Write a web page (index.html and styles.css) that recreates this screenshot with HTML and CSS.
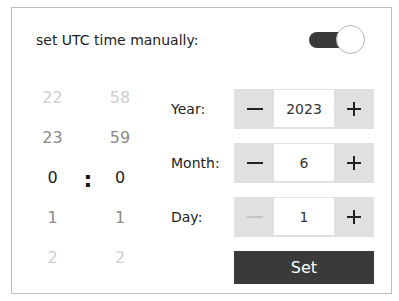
FILE: index.html
```html
<!DOCTYPE html>
<html>
<head>
<meta charset="utf-8">
<link rel="stylesheet" href="styles.css">
</head>
<body>
<div class="panel">
  <div class="header">
    <span class="title">set UTC time manually:</span>
    <div class="switch"><span class="track"></span><span class="knob"></span></div>
  </div>
  <div class="body">
    <div class="picker">
      <div class="col hours">
        <div class="cell far">22</div>
        <div class="cell near">23</div>
        <div class="cell sel">0</div>
        <div class="cell near">1</div>
        <div class="cell far">2</div>
      </div>
      <div class="col colon">
        <div class="cell"></div>
        <div class="cell"></div>
        <div class="cell sep">:</div>
        <div class="cell"></div>
        <div class="cell"></div>
      </div>
      <div class="col minutes">
        <div class="cell far">58</div>
        <div class="cell near">59</div>
        <div class="cell sel">0</div>
        <div class="cell near">1</div>
        <div class="cell far">2</div>
      </div>
    </div>
    <div class="form">
      <div class="row">
        <span class="label">Year:</span>
        <div class="stepper">
          <button class="btn"><svg width="16" height="16" viewBox="0 0 16 16"><line x1="0" y1="8" x2="16" y2="8" stroke="#222" stroke-width="2"/></svg></button>
          <span class="value">2023</span>
          <button class="btn"><svg width="16" height="16" viewBox="0 0 16 16"><line x1="1" y1="8" x2="15" y2="8" stroke="#222" stroke-width="2"/><line x1="8" y1="1" x2="8" y2="15" stroke="#222" stroke-width="2"/></svg></button>
        </div>
      </div>
      <div class="row">
        <span class="label">Month:</span>
        <div class="stepper">
          <button class="btn"><svg width="16" height="16" viewBox="0 0 16 16"><line x1="0" y1="8" x2="16" y2="8" stroke="#222" stroke-width="2"/></svg></button>
          <span class="value">6</span>
          <button class="btn"><svg width="16" height="16" viewBox="0 0 16 16"><line x1="1" y1="8" x2="15" y2="8" stroke="#222" stroke-width="2"/><line x1="8" y1="1" x2="8" y2="15" stroke="#222" stroke-width="2"/></svg></button>
        </div>
      </div>
      <div class="row">
        <span class="label">Day:</span>
        <div class="stepper">
          <button class="btn"><svg width="16" height="16" viewBox="0 0 16 16"><line x1="0" y1="8" x2="16" y2="8" stroke="#c4c4c4" stroke-width="2"/></svg></button>
          <span class="value">1</span>
          <button class="btn"><svg width="16" height="16" viewBox="0 0 16 16"><line x1="1" y1="8" x2="15" y2="8" stroke="#222" stroke-width="2"/><line x1="8" y1="1" x2="8" y2="15" stroke="#222" stroke-width="2"/></svg></button>
        </div>
      </div>
      <div class="row">
        <span class="label"></span>
        <button class="set">Set</button>
      </div>
    </div>
  </div>
</div>
</body>
</html>
```

FILE: styles.css
```css
html, body {
  margin: 0;
  padding: 0;
  background: #fff;
}
body {
  font-family: "DejaVu Sans", sans-serif;
  color: #222;
}
.panel {
  box-sizing: border-box;
  width: 381px;
  height: 287px;
  margin: 7px 0 0 11px;
  border: 1px solid #bcbcbc;
}
.header {
  height: 64px;
  display: flex;
  align-items: center;
  justify-content: space-between;
  padding: 0 26px 0 24px;
}
.title {
  font-size: 14px;
}
.switch {
  position: relative;
  width: 56px;
  height: 28px;
}
.track {
  position: absolute;
  left: 0;
  top: 6px;
  width: 40px;
  height: 16px;
  border-radius: 8px;
  background: #3a3a3a;
}
.knob {
  position: absolute;
  right: 0;
  top: -1px;
  box-sizing: border-box;
  width: 29px;
  height: 29px;
  border-radius: 50%;
  background: #fff;
  border: 1px solid #b4b4b4;
}
.body {
  display: flex;
}
.picker {
  display: flex;
  padding: 5px 0 0 15px;
  width: 144px;
  box-sizing: border-box;
}
.col {
  display: flex;
  flex-direction: column;
}
.hours { width: 51px; }
.colon { width: 20px; }
.minutes { width: 44px; }
.cell {
  height: 40px;
  display: flex;
  align-items: center;
  justify-content: center;
  font-size: 16px;
}
.far { color: #cfcfcf; }
.near { color: #8a8a8a; }
.sel { color: #222; }
.sep {
  font-size: 22px;
  font-weight: bold;
  padding-top: 4px;
  box-sizing: border-box;
  color: #111;
}
.form {
  padding: 17px 0 0 15px;
  display: flex;
  flex-direction: column;
  gap: 14px;
}
.row {
  display: flex;
  align-items: center;
}
.label {
  width: 63px;
  font-size: 14px;
}
.stepper {
  display: flex;
  width: 140px;
  height: 40px;
  box-sizing: border-box;
  background: #e0e0e0;
  border: 1px solid #e0e0e0;
  border-bottom-width: 2px;
}
.btn {
  width: 39px;
  border: 0;
  padding: 0;
  margin: 0;
  background: transparent;
  display: flex;
  align-items: center;
  justify-content: center;
}
.value {
  flex: 1;
  background: #fff;
  display: flex;
  align-items: center;
  justify-content: center;
  font-size: 14px;
  color: #333;
}
.set {
  width: 140px;
  height: 33px;
  border: 0;
  padding: 0;
  background: #3a3a3a;
  color: #fff;
  font-family: "DejaVu Sans", sans-serif;
  font-size: 16px;
}
```
